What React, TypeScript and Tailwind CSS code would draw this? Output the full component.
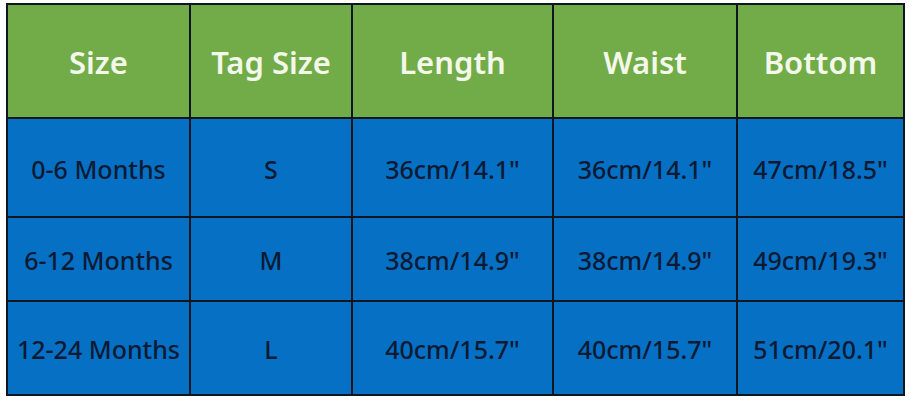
const headers = ['Size', 'Tag Size', 'Length', 'Waist', 'Bottom']

const rows = [
  ['0-6 Months', 'S', '36cm/14.1"', '36cm/14.1"', '47cm/18.5"'],
  ['6-12 Months', 'M', '38cm/14.9"', '38cm/14.9"', '49cm/19.3"'],
  ['12-24 Months', 'L', '40cm/15.7"', '40cm/15.7"', '51cm/20.1"'],
]

const rowHeights = ['h-[97px]', 'h-[82px]', 'h-[92px]']

export default function App() {
  return (
    <div className="h-[403px] w-[912px] bg-white pl-[6px] pt-[3px]" style={{ fontFamily: '"Noto Sans", "Open Sans", sans-serif' }}>
      <div className="inline-grid grid-cols-[181px_160px_199px_182px_165px] gap-[2px] bg-[#10161f] p-[2px]">
        {headers.map((h) => (
          <div
            className="flex h-[112px] items-center justify-center bg-[#72ac48] pt-[2px] text-[31px] font-semibold text-[#f4f8ea]"
            key={h}
          >
            {h}
          </div>
        ))}
        {rows.map((row, i) =>
          row.map((cell, j) => (
            <div
              className={`flex ${rowHeights[i]} items-center justify-center bg-[#0670c4] pt-[4px] text-[25px] font-medium text-[#0c1a33]`}
              key={`${i}-${j}`}
            >
              {cell}
            </div>
          )),
        )}
      </div>
    </div>
  )
}
